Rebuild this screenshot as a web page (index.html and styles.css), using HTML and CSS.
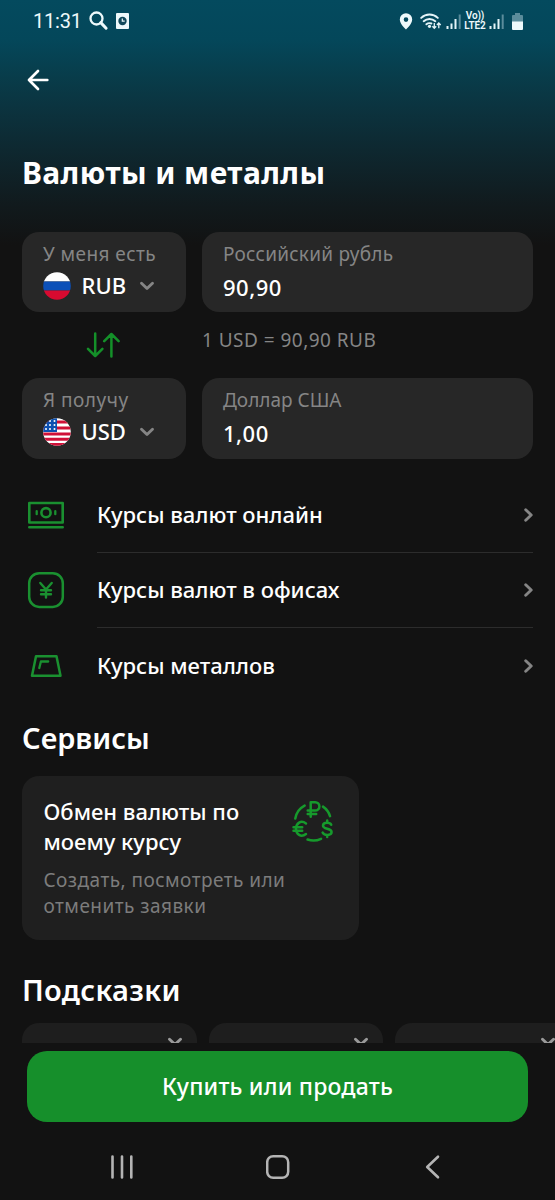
FILE: index.html
```html
<!DOCTYPE html>
<html lang="ru">
<head>
<meta charset="utf-8">
<title>Валюты и металлы</title>
<link rel="stylesheet" href="styles.css">
</head>
<body>
<svg class="defs" width="0" height="0">
  <symbol id="down" viewBox="0 0 16 10"><path d="M2.500 2.300l5.500 5.200 5.500-5.200" fill="none" stroke="currentColor" stroke-width="2.900" stroke-linecap="round" stroke-linejoin="round"/></symbol>
  <symbol id="right" viewBox="0 0 10 16"><path d="M2.700 2.700L8.200 8l-5.500 5.300" fill="none" stroke="currentColor" stroke-width="2.900" stroke-linecap="round" stroke-linejoin="round"/></symbol>
  <symbol id="signal" viewBox="0 0 15 15"><path d="M1.500 15v-3M5.500 15V9.500M9.500 15V5" stroke="#e4f4f8" stroke-width="2"/><path d="M13.700 15V.5" stroke="#5b8c9b" stroke-width="2"/></symbol>
</svg>
<div class="screen">
  <header class="status">
    <div class="status-left">
      <span class="clock">11:31</span>
      <svg width="20" height="20" viewBox="0 0 20 20"><circle cx="7.500" cy="7.500" r="6" fill="none" stroke="#eef9fb" stroke-width="2.300"/><path d="M11.800 11.600l5.300 5.600" stroke="#eef9fb" stroke-width="3" stroke-linecap="round"/></svg>
      <svg class="sim" width="13" height="16" viewBox="0 0 13 16"><rect width="13" height="16" rx="1" fill="#eef9fb"/><circle cx="6.500" cy="8" r="4.200" fill="#11485a"/><path d="M6.300 5.500v2.700h2.400" fill="none" stroke="#eef9fb" stroke-width="1.200"/></svg>
    </div>
    <div class="status-right">
      <svg class="pin" width="14" height="17" viewBox="0 0 14 17"><path fill="#eef9fb" fill-rule="evenodd" d="M7 .3a6.200 6.200 0 0 0-6.200 6.200C.8 11 7 16.500 7 16.500s6.200-5.500 6.200-10A6.200 6.200 0 0 0 7 .3zM7 4.300a2.300 2.300 0 1 1 0 4.600 2.300 2.300 0 0 1 0-4.600z"/></svg>
      <svg class="wifi" width="22" height="17" viewBox="0 0 22 17"><g fill="none" stroke="#e4f4f8" stroke-width="1.900" stroke-linecap="round"><path d="M1.200 4.900a12 12 0 0 1 16.600 0M3.700 8.200a8.600 8.600 0 0 1 11.600 0M6.400 11.300a5 5 0 0 1 5-.8"/></g><circle cx="9.500" cy="13.300" r="1.600" fill="#e4f4f8"/><path d="M14.300 10v5M12.400 13.300l1.900 2 1.900-2M18.800 15.300v-5M16.900 12l1.900-2 1.900 2" fill="none" stroke="#e4f4f8" stroke-width="1.300"/></svg>
      <svg class="sig" width="15" height="15"><use href="#signal"/></svg>
      <span class="volte"><span>Vo))</span><span>LTE2</span></span>
      <svg class="sig" width="15" height="15"><use href="#signal"/></svg>
      <svg class="battery" width="11" height="17" viewBox="0 0 11 17"><path d="M3 0h5v2h2a1 1 0 0 1 1 1v6H0V3a1 1 0 0 1 1-1h2z" fill="#5b8c9b"/><path d="M0 8.500h11V16a1 1 0 0 1-1 1H1a1 1 0 0 1-1-1z" fill="#eef9fb"/></svg>
    </div>
  </header>
  <nav class="topbar">
    <svg width="22" height="22" viewBox="0 0 22 22"><path d="M20.300 11H2M11 2L2 11l9 9" fill="none" stroke="#fff" stroke-width="2.700" stroke-linecap="round" stroke-linejoin="round"/></svg>
  </nav>
  <h1>Валюты и металлы</h1>

  <section class="converter">
    <div class="box">
      <span class="label l-have">У меня есть</span>
      <div class="pick">
        <svg width="28" height="28" viewBox="0 0 28 28"><clipPath id="c1"><circle cx="14" cy="14" r="13.800"/></clipPath><g clip-path="url(#c1)"><path fill="#fff" d="M0 0h28v9.500H0z"/><path fill="#0c50b8" d="M0 9.500h28v9H0z"/><path fill="#d80a30" d="M0 18.500h28V28H0z"/></g></svg>
        <span class="code">RUB</span>
        <svg class="chev" width="16" height="10"><use href="#down"/></svg>
      </div>
    </div>
    <div class="box">
      <span class="label l-rub">Российский рубль</span>
      <span class="amount">90,90</span>
    </div>
    <div class="swap">
      <svg width="34" height="26" viewBox="0 0 34 26"><path d="M9.200 1.500v22M2 16.800l7.200 7.200 7.200-7.200M25.400 24.500V2M18.200 9.200L25.400 2l7.200 7.200" fill="none" stroke="#149029" stroke-width="2.500" stroke-linecap="round" stroke-linejoin="round"/></svg>
    </div>
    <div class="rate">1 USD = 90,90 RUB</div>
    <div class="box">
      <span class="label l-get">Я получу</span>
      <div class="pick">
        <svg width="28" height="28" viewBox="0 0 28 28"><clipPath id="c2"><circle cx="14" cy="14" r="13.800"/></clipPath><g clip-path="url(#c2)"><path fill="#fff" d="M0 0h28v28H0z"/><path stroke="#d01038" stroke-width="3" d="M0 4h28M0 10h28M0 15.900h28M0 21.300h28M0 26.600h28"/><path fill="#0c50b0" d="M0 0h14v14H0z"/><g fill="#fff"><circle cx="7" cy="3" r="1"/><circle cx="11.500" cy="3" r="1"/><circle cx="3" cy="7" r="1"/><circle cx="7" cy="7" r="1"/><circle cx="11.500" cy="7" r="1"/><circle cx="3" cy="11" r="1"/><circle cx="7" cy="11" r="1"/><circle cx="11.500" cy="11" r="1"/></g></g></svg>
        <span class="code">USD</span>
        <svg class="chev" width="16" height="10"><use href="#down"/></svg>
      </div>
    </div>
    <div class="box">
      <span class="label">Доллар США</span>
      <span class="amount">1,00</span>
    </div>
  </section>

  <ul class="links">
    <li>
      <svg class="ico" width="48" height="40" viewBox="0 0 48 40"><g fill="none" stroke="#1a9030" stroke-width="2.600" stroke-linejoin="round" stroke-linecap="round"><path d="M7.300 8h33.400v19.500H7.300zM7.300 32.300h33.400"/><circle cx="24" cy="17.700" r="4.600"/><path d="M14.700 16.200v3M33.300 16.200v3" stroke-width="2.300"/></g></svg>
      <div class="row"><span>Курсы валют онлайн</span><svg width="10" height="16"><use href="#right"/></svg></div>
    </li>
    <li>
      <svg class="ico" width="48" height="40" viewBox="0 0 48 40"><g fill="none" stroke="#1a9030" stroke-width="2.500" stroke-linejoin="round" stroke-linecap="round"><rect x="7.200" y="3.300" width="33.600" height="33.600" rx="10"/><path d="M18.300 13l5.700 6.500 5.700-6.500M24 19.500v8M19 20.300h10M19 24.300h10" stroke-width="2.400"/></g></svg>
      <div class="row"><span>Курсы валют в офисах</span><svg width="10" height="16"><use href="#right"/></svg></div>
    </li>
    <li>
      <svg class="ico" width="48" height="40" viewBox="0 0 48 40"><g fill="none" stroke="#1a9030" stroke-width="2.500" stroke-linejoin="round" stroke-linecap="round"><path d="M14 10.200h20.500l4 19.600H10z"/><path d="M17.300 22l1.600-6.500h7.300" stroke-width="2.300"/></g></svg>
      <div class="row"><span>Курсы металлов</span><svg width="10" height="16"><use href="#right"/></svg></div>
    </li>
  </ul>

  <h2>Сервисы</h2>
  <article class="service">
    <div class="service-text">
      <p class="service-name">Обмен валюты по<br>моему курсу</p>
      <p class="service-note">Создать, посмотреть или<br>отменить заявки</p>
    </div>
    <svg class="cycle" width="42" height="42" viewBox="0 0 42 42"><g fill="none" stroke="#169a2c" stroke-width="2.500" stroke-linecap="round" stroke-linejoin="round"><path d="M3.300 18.500A18 18 0 0 1 12.600 5.600M31 6.600a18 18 0 0 1 7 9.500M15.600 39.500a18 18 0 0 0 13.400-.7"/><path d="M18.700 16.700V2.200h4.500a4.200 4.200 0 0 1 0 8.400H15.700M15.700 13.900h8.500"/><path d="M14 23.500c-5-3.800-10-.3-10 5.300s5 9 10 5.200M1.500 27.200h8.700M1.500 30.700h8.700"/><path d="M39.200 24.800c-1-2.500-8-3-8.200.8-.2 4 8.600 2.400 8.600 6.500 0 3.700-7.700 3.600-9 .5M35.200 20.500v2M35.200 35v2"/></g></svg>
  </article>

  <h2 class="hints-title">Подсказки</h2>
  <div class="hints">
    <div class="hint"><svg width="16" height="10"><use href="#down"/></svg></div>
    <div class="hint"><svg width="16" height="10"><use href="#down"/></svg></div>
    <div class="hint"><svg width="16" height="10"><use href="#down"/></svg></div>
  </div>

  <button class="buy" type="button">Купить или продать</button>

  <footer class="sysnav">
    <svg width="24" height="26" viewBox="0 0 24 26"><path d="M2.500 2.500v21M12 2.500v21M21.300 2.500v21" stroke="#b4b4b4" stroke-width="2.600" stroke-linecap="round"/></svg>
    <svg width="24" height="26" viewBox="0 0 24 26"><rect x="1.200" y="2.200" width="21" height="21.600" rx="6" fill="none" stroke="#b4b4b4" stroke-width="2.500"/></svg>
    <svg width="24" height="26" viewBox="0 0 24 26"><path d="M17 2.700L6.200 13 17 23.300" fill="none" stroke="#b4b4b4" stroke-width="2.600" stroke-linecap="round" stroke-linejoin="round"/></svg>
  </footer>
</div>
</body>
</html>
```
FILE: styles.css
```css
* { box-sizing: border-box; }
body { margin: 0; background: #121212; color: #fff; font-family: "Noto Sans", sans-serif; }
h1, h2, p, ul { margin: 0; padding: 0; }
svg { display: block; flex: none; }
.defs { position: absolute; }
.screen {
  width: 555px; height: 1200px; overflow: hidden;
  display: flex; flex-direction: column;
  background: linear-gradient(#044a5e 0, #04475a 40px, #083d4b 75px, #0b3440 105px, #0e2830 150px, #111a1d 205px, #121212 245px);
  white-space: nowrap;
}
.status { height: 42px; padding: 0 32px 0 33px; display: flex; justify-content: space-between; align-items: center; color: #eef9fb; }
.status-left, .status-right { display: flex; align-items: center; }
.clock { font: 400 20px/42px Roboto, sans-serif; letter-spacing: -.2px; width: 56px; }
.sim { margin-left: 7px; }
.pin { margin-right: 7px; }
.wifi { margin-right: 4px; }
.volte { display: flex; flex-direction: column; align-items: center; width: 22px; margin: 0 3px; font: 600 10px/10px Roboto, sans-serif; letter-spacing: -.1px; }
.battery { margin-left: 8px; }
.topbar { height: 76px; padding: 27px 0 0 27px; }
h1 { height: 114px; padding-left: 22px; font-size: 30px; line-height: 109px; font-weight: 700; letter-spacing: .43px; }

.converter { display: grid; grid-template-columns: 163.500px 331px; grid-template-rows: 80px 66px 80.500px; column-gap: 16.500px; padding-left: 22px; }
.box { background: #272727; border-radius: 17px; padding: 8px 21px 0; display: flex; flex-direction: column; }
.label { color: #858585; font-size: 19px; line-height: 28px; }
.l-have { letter-spacing: .43px; }
.l-rub { letter-spacing: .25px; }
.l-get { letter-spacing: .5px; }
.pick { display: flex; align-items: center; height: 35px; }
.code { font-size: 22px; line-height: 30px; font-weight: 500; width: 57px; margin: -2px 0 0 10.500px; }
.chev { color: #858585; margin-left: .5px; }
.amount { font-size: 22px; line-height: 38px; font-weight: 500; letter-spacing: .5px; }
.swap { display: flex; align-items: center; justify-content: center; padding: 0 1px 1px 0; }
.rate { color: #858585; font-size: 19px; line-height: 56px; letter-spacing: .47px; }

.links { list-style: none; margin-top: 18.500px; padding: 0 22px; }
.links li { display: flex; height: 75.500px; align-items: center; }
.ico { margin-right: 27px; }
.row { flex: 1; height: 100%; display: flex; justify-content: space-between; align-items: center; font-size: 22px; font-weight: 500; border-bottom: 1px solid #2c2c2c; }
.row span { margin-top: -1px; }
.row svg { color: #858585; margin-top: 1px; }
.links li:last-child .row { border: 0; }
.links li:last-child .row span { margin-top: -2px; }
.links li:last-child .row svg { margin-top: 0; }

h2 { padding-left: 22px; height: 72.500px; line-height: 67px; font-size: 29px; font-weight: 600; }
.service { margin-left: 22px; width: 337px; height: 163.500px; border-radius: 17px; background: #1f1f1f; padding: 20px 25px 0 21.500px; display: flex; justify-content: space-between; }
.service-name { font-size: 22px; line-height: 30px; font-weight: 500; }
.service-note { margin-top: 11px; color: #7c7c7c; font-size: 19px; line-height: 26px; letter-spacing: .46px; }
.service-text { width: 246px; margin-right: 2px; }
.cycle { margin-top: 4px; }
.hints-title { height: 83.500px; line-height: 99px; letter-spacing: .3px; }
.hints { display: flex; gap: 12px; margin-left: 22px; height: 20px; overflow: hidden; }
.hint { flex: none; width: 174.500px; height: 60px; border-radius: 17px; background: #1e1e1e; padding: 13.500px 14px 0; display: flex; justify-content: flex-end; color: #9a9a9a; }
.buy { flex: none; margin: 8px 27px 0; height: 71px; border: 0; border-radius: 20px; background: #168f2b; color: #fff; font: 500 23px/71px "Noto Sans", sans-serif; padding: 0; letter-spacing: .2px; }
.sysnav { display: flex; justify-content: space-between; padding: 32px 110px 0 110px; }
```
